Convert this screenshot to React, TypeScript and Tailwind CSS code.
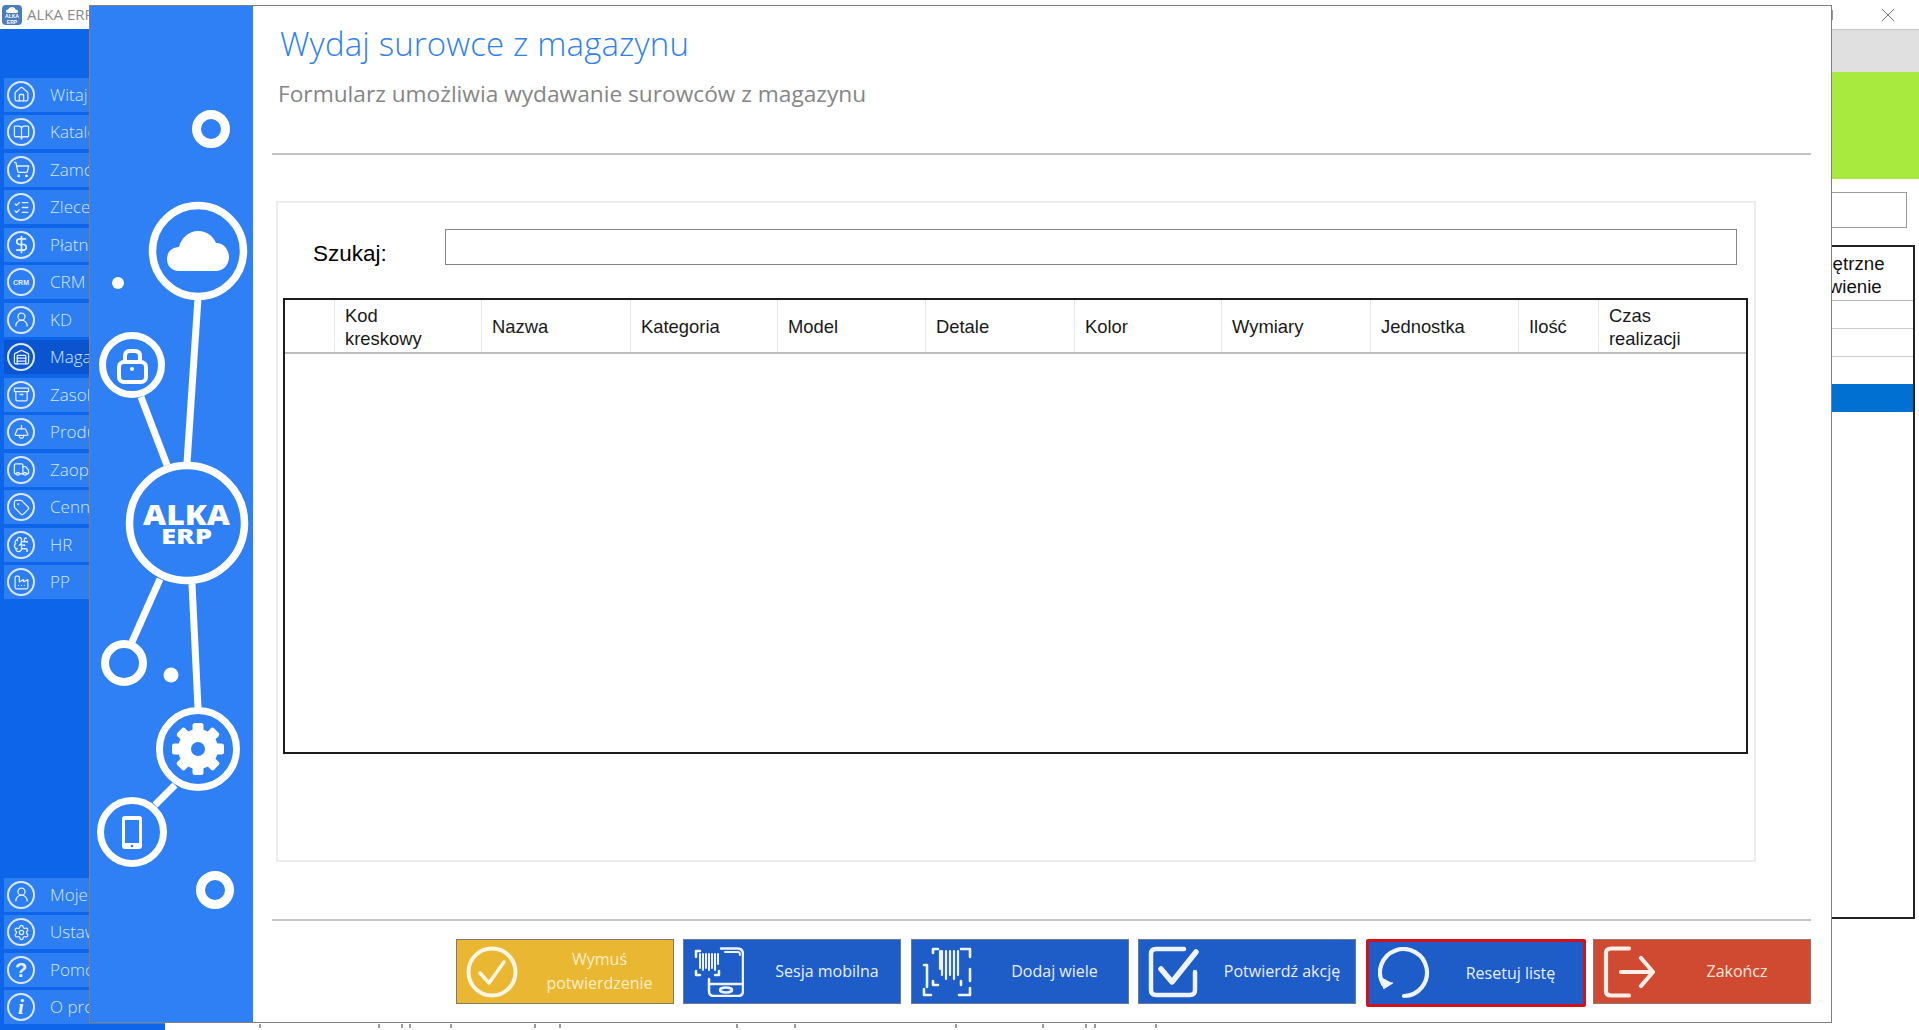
import React from "react";
import {
  Home, BookOpen, ShoppingCart, ListChecks, DollarSign, UserRound, Warehouse, Archive,
  LampCeiling, Truck, Tag, BrainCircuit, Factory, Settings,
} from "lucide-react";

const seg = "font-['Open_Sans','Noto_Sans',sans-serif]";
const ari = "font-['Liberation_Sans',Arial,sans-serif]";

type Item = { label: string; icon: React.ReactNode; active?: boolean };
const ic = { size: 17, strokeWidth: 1.8, color: "#e6effd" };
const topItems: Item[] = [
  { label: "Witaj", icon: <Home {...ic} /> },
  { label: "Katalog", icon: <BookOpen {...ic} /> },
  { label: "Zamówienia", icon: <ShoppingCart {...ic} /> },
  { label: "Zlecenia", icon: <ListChecks {...ic} /> },
  { label: "Płatności", icon: <DollarSign {...ic} size={19} strokeWidth={2.2} /> },
  { label: "CRM", icon: <span className={`${ari} text-[7px] font-bold leading-none text-[#e6effd]`}>CRM</span> },
  { label: "KD", icon: <UserRound {...ic} /> },
  { label: "Magazyn", icon: <Warehouse {...ic} />, active: true },
  { label: "Zasoby", icon: <Archive {...ic} /> },
  { label: "Produkcja", icon: <LampCeiling {...ic} /> },
  { label: "Zaopatrzenie", icon: <Truck {...ic} /> },
  { label: "Cennik", icon: <Tag {...ic} /> },
  { label: "HR", icon: <BrainCircuit {...ic} /> },
  { label: "PP", icon: <Factory {...ic} /> },
];
const bottomItems: Item[] = [
  { label: "Moje konto", icon: <UserRound {...ic} /> },
  { label: "Ustawienia", icon: <Settings {...ic} /> },
  { label: "Pomoc", icon: <span className={`${ari} text-[20px] font-bold leading-none text-[#e6effd]`}>?</span> },
  { label: "O programie", icon: <span className="font-['Liberation_Serif',serif] text-[21px] font-bold italic leading-none text-[#f2f6fe]">i</span> },
];

function NavItem({ item }: { item: Item }) {
  return (
    <div className={`flex h-[34px] items-center pl-[3px] ${item.active ? "bg-[#0a55cf]" : "bg-[#2c7ef2]"}`}>
      <div className="flex h-[28px] w-[28px] shrink-0 items-center justify-center rounded-full border-2 border-[#dbe8fc]">
        {item.icon}
      </div>
      <span className={`${seg} ml-[15px] whitespace-nowrap text-[17px] font-light text-[#d6e5fc]`}>{item.label}</span>
    </div>
  );
}

function Art() {
  const w = "#ffffff";
  const bg = "#2f7ff5";
  return (
    <svg width="163" height="1016" viewBox="90 6 163 1016" className="block">
      <g stroke={w} strokeWidth="7" fill="none">
        <path d="M198 298 L187 463" />
        <path d="M141 397 L167 465" />
        <path d="M160 579 L132 642" strokeWidth="7" />
        <path d="M192 584 L198 708" />
        <path d="M175 785 L155 805" />
      </g>
      <g fill="none" stroke={w}>
        <circle cx="211" cy="129" r="14.5" strokeWidth="9" />
        <circle cx="198" cy="251" r="45.5" strokeWidth="7.5" />
        <circle cx="132" cy="365" r="29.5" strokeWidth="7" />
        <circle cx="187" cy="523" r="57.5" strokeWidth="7.5" />
        <circle cx="124" cy="663" r="19" strokeWidth="8" />
        <circle cx="198" cy="749" r="38.5" strokeWidth="7" />
        <circle cx="132" cy="832" r="31.5" strokeWidth="7" />
        <circle cx="215" cy="890" r="14.5" strokeWidth="9" />
      </g>
      <circle cx="118" cy="283" r="6" fill={w} />
      <circle cx="171" cy="675" r="7.5" fill={w} />
      <path fill={w} d="M179 271 C171 271 167 265 167 259 C167 252 172 247 179 247 C181 238 189 231 198 231 C207 231 213 236 216 243 C224 243 229 250 229 257 C229 265 223 271 216 271 Z" />
      <g fill="none" stroke={w} strokeWidth="4">
        <rect x="119" y="362" width="27" height="20" rx="5" />
        <path d="M125 362 V356 Q125 351 130 351 H135 Q140 351 140 356 V362" />
      </g>
      <circle cx="132" cy="369" r="2" fill={w} />
      <text x="143" y="525" fill={w} textLength="87" lengthAdjust="spacingAndGlyphs" className={`${seg} text-[29px] font-extrabold`}>ALKA</text>
      <text x="161" y="544" fill={w} textLength="51" lengthAdjust="spacingAndGlyphs" className={`${seg} text-[21px] font-extrabold`}>ERP</text>
      <g fill={w}>
        <circle cx="198" cy="749" r="20" />
        {[0, 45, 90, 135, 180, 225, 270, 315].map((a) => (
          <rect key={a} x="192.5" y="723" width="11" height="12" rx="2.5" transform={`rotate(${a} 198 749)`} />
        ))}
      </g>
      <circle cx="198" cy="749" r="7" fill={bg} />
      <rect x="122" y="816" width="20" height="33" rx="3" fill={w} />
      <rect x="125" y="820" width="14" height="23" fill={bg} />
      <circle cx="132" cy="846" r="1.3" fill={bg} />
    </svg>
  );
}

const S = { fill: "none", stroke: "#eef3fc", strokeLinecap: "round" as const, strokeLinejoin: "round" as const };

function IconCheck() {
  return (
    <svg width="52" height="52" viewBox="0 0 52 52" {...S} stroke="#fdf6e2" strokeWidth="4">
      <circle cx="26" cy="26" r="23.5" />
      <path d="M14 27 L23 37 L38 16" strokeWidth="3.5" />
    </svg>
  );
}
function IconMobile() {
  return (
    <svg width="50" height="50" viewBox="0 0 50 50" {...S} strokeWidth="2.5">
      <path d="M27 1.5 H43 Q49 1.5 49 7 V44 Q49 49 44 49 H20 Q15 49 15 44 V32" />
      <path d="M31 5 H44 Q46 5 46 8" strokeWidth="2" />
      <path d="M15 37 H49" />
      <ellipse cx="32" cy="43" rx="6" ry="2.5" />
      <path d="M2 10 V4 H6 M2 24 V28 H6 M25 24 V28 H21" />
      <path d="M6 7 V21 M9 7 V23 M12 7 V21 M15 7 V23 M18 7 V21 M21 7 V23 M24 7 V17" strokeWidth="2" />
    </svg>
  );
}
function IconBarcode() {
  return (
    <svg width="50" height="50" viewBox="0 0 50 50" {...S} strokeWidth="2.6">
      <path d="M11 6 V2 H16 M39 2 H48 V10 M2 18 H5 M5 18 V40 M2 42 V48 H9 M37 48 H48 V41 M48 22 V34" />
      <path d="M11 34 V38 H16 M39 34 V38" />
      <path d="M20 4 V28 M24 4 V32 M28 4 V28 M32 4 V32 M36 4 V28 M18 4 V22" strokeWidth="2.2" />
    </svg>
  );
}
function IconConfirm() {
  return (
    <svg width="52" height="52" viewBox="0 0 52 52" {...S} strokeWidth="4.5">
      <path d="M36 3 H8 Q3 3 3 8 V44 Q3 49 8 49 H42 Q47 49 47 44 V26" />
      <path d="M13 23 L24 36 L48 6" strokeWidth="5.5" />
    </svg>
  );
}
function IconReset() {
  return (
    <svg width="52" height="52" viewBox="0 0 52 52" {...S} strokeWidth="4.2">
      <path d="M5 37 A23.5 23.5 0 1 1 26 49" />
      <path d="M3 30 L6 41 L14 36" fill="#eef3fc" strokeWidth="2" />
    </svg>
  );
}
function IconExit() {
  return (
    <svg width="52" height="52" viewBox="0 0 52 52" {...S} stroke="#fdeee9" strokeWidth="4.2">
      <path d="M26 2.5 H8 Q3 2.5 3 7 V45 Q3 49.5 8 49.5 H26" />
      <path d="M18 26 H50 M38 12 L50 26 L38 40" />
    </svg>
  );
}

const cols = ["", "Kod kreskowy", "Nazwa", "Kategoria", "Model", "Detale", "Kolor", "Wymiary", "Jednostka", "Ilość", "Czas realizacji"];

type Btn = { icon: React.ReactNode; text: string; cls: string; txt: string; red?: boolean };
const buttons: Btn[] = [
  { icon: <IconCheck />, text: "Wymuś potwierdzenie", cls: "bg-[#e9b732] border-[#7d7a6c]", txt: "text-[#fbeec6]" },
  { icon: <IconMobile />, text: "Sesja mobilna", cls: "bg-[#1e5cc8] border-[#6a7a92]", txt: "text-[#e9effa]" },
  { icon: <IconBarcode />, text: "Dodaj wiele", cls: "bg-[#1e5cc8] border-[#6a7a92]", txt: "text-[#e9effa]" },
  { icon: <IconConfirm />, text: "Potwierdź akcję", cls: "bg-[#1e5cc8] border-[#6a7a92]", txt: "text-[#e9effa]" },
  { icon: <IconReset />, text: "Resetuj listę", cls: "", txt: "text-[#e9effa]", red: true },
  { icon: <IconExit />, text: "Zakończ", cls: "bg-[#cf4a30] border-[#8a7a76]", txt: "text-[#fbe5de]" },
];

const ticks = [260, 379, 402, 410, 451, 535, 560, 737, 795, 956, 1043, 1086, 1095, 1156];

export default function App() {
  return (
    <div className={`relative flex h-[1030px] w-[1919px] flex-col overflow-hidden bg-white ${seg}`}>
      {/* window title bar */}
      <div className="flex h-[29px] shrink-0 items-center bg-white">
        <div className="ml-[2px] flex h-[20px] w-[20px] flex-col items-center justify-end rounded-sm bg-[#4a7cc0]">
          <svg width="12" height="6" viewBox="0 0 12 6" fill="#ffffff"><path d="M2 6 Q0 6 0 4 Q0 2.5 2 2.5 Q3 0 6 0 Q9 0 9.5 2.5 Q12 2.5 12 4.5 Q12 6 10 6 Z" /></svg>
          <span className={`${ari} text-[5px] font-bold leading-[6px] text-white`}>ALKA</span>
          <span className={`${ari} text-[5px] font-bold leading-[6px] text-white`}>ERP</span>
        </div>
        <span className="ml-[5px] text-[15px] text-[#8a8a8a]">ALKA ERP</span>
        <div className="ml-auto mr-[24px] flex items-center gap-[48px]">
          <div className="h-[10px] w-[8px] border border-[#9a9a9a]" />
          <svg width="14" height="14" viewBox="0 0 14 14" stroke="#777" strokeWidth="1"><path d="M1 1 L13 13 M13 1 L1 13" /></svg>
        </div>
      </div>

      <div className="flex min-h-0 flex-1">
        {/* sidebar */}
        <div className="flex w-[165px] shrink-0 flex-col overflow-hidden bg-[#0d66ea] pb-[6px] pl-[4px] pt-[48.5px]">
          <div className="flex flex-col gap-[3.5px]">
            {topItems.map((i) => <NavItem key={i.label} item={i} />)}
          </div>
          <div className="mt-auto flex flex-col gap-[3.5px]">
            {bottomItems.map((i) => <NavItem key={i.label} item={i} />)}
          </div>
        </div>

        {/* page behind the dialog */}
        <div className="flex min-w-0 flex-1 flex-col">
          <div className="h-[43px] shrink-0 border-t border-[#c8c8c8] bg-[#e0e0e0]" />
          <div className="h-[107px] shrink-0 bg-[#a9ea3f]" />
          <div className="ml-auto mr-[12px] mt-[13px] h-[36px] w-[300px] shrink-0 border border-[#9a9a9a]" />
          <div className={`${ari} ml-auto mr-[4px] mt-[17px] flex h-[674px] w-[400px] shrink-0 flex-col border-2 border-[#222] text-[18.7px] text-[#111]`}>
            <div className="flex h-[54px] shrink-0 items-center justify-end border-b border-[#bbbbbb] pt-[2px]">
              <span className="w-[132px] leading-[23px]">Wewnętrzne Zamówienie</span>
            </div>
            <div className="h-[28px] shrink-0 border-b border-[#cccccc]" />
            <div className="h-[28px] shrink-0 border-b border-[#cccccc]" />
            <div className="h-[27px] shrink-0" />
            <div className="h-[28px] shrink-0 bg-[#0070d3]" />
          </div>
        </div>
      </div>

      {/* bits of the page's text showing under the dialog */}
      <svg width="1100" height="5" viewBox="160 0 1100 5" className="absolute left-[160px] top-[1024px]" stroke="#555" strokeWidth="1.2">
        {ticks.map((x) => <path key={x} d={`M${x} 0 V4`} />)}
      </svg>

      {/* dialog */}
      <div className="absolute left-[89px] top-[5px] flex h-[1018px] w-[1743px] border border-[#808080] bg-white">
        <div className="w-[163px] shrink-0 bg-[#2f7ff5]">
          <Art />
        </div>
        <div className="flex min-w-0 flex-1 flex-col pl-[19px] pr-[20px]">
          <h1 className="mt-[16px] h-[44px] pl-[8px] text-[33px] font-light leading-[44px] tracking-[0.15px] text-[#2f7ff0]">Wydaj surowce z magazynu</h1>
          <p className="mt-[12px] h-[32px] pl-[6px] text-[22.7px] font-normal leading-[32px] text-[#868686]">Formularz umożliwia wydawanie surowców z magazynu</p>
          <div className="mt-[43px] h-[2px] shrink-0 bg-[#c4c4c4]" />

          <div className="ml-[4px] mt-[46px] flex h-[661px] w-[1480px] shrink-0 flex-col border-2 border-[#ececec] pl-[5px] pt-[26px]">
            <div className="flex">
              <span className={`${ari} ml-[30px] w-[132px] pt-[7px] text-[22.5px] leading-[36px] text-black`}>Szukaj:</span>
              <div className="h-[36px] w-[1292px] border-[1.5px] border-[#858585]" />
            </div>
            <div className={`${ari} mt-[26px] flex h-[456px] w-[1465px] flex-col border-2 border-[#1c1c1c] text-[18.4px] text-[#1a1a1a]`}>
              <div className="grid h-[54px] shrink-0 grid-cols-[50px_147px_149px_147px_148px_149px_147px_149px_148px_80px_147px] border-b-2 border-[#bdbdbd]">
                {cols.map((c, i) => (
                  <div key={i} className="flex items-center border-r border-[#e8e8e8] pl-[10px] pr-[30px] pt-[1px] leading-[23px] last:border-r-0">{c}</div>
                ))}
              </div>
            </div>
          </div>

          <div className="mt-[57px] h-[2px] shrink-0 bg-[#c4c4c4]" />
          <div className="ml-[183.5px] mt-[18px] flex items-start gap-[9.5px]">
            {buttons.map((b) => (
              <div
                key={b.text}
                className={`flex w-[218px] shrink-0 items-center ${b.red ? "-mr-[2px] h-[68px] w-[220px] rounded-[2px] border-[3px] border-[#d3111b] bg-[#1e5cc8]" : `h-[65px] border ${b.cls}`}`}
              >
                <div className="flex w-[70px] shrink-0 items-center justify-center">{b.icon}</div>
                <span className={`flex-1 pb-[1px] text-center text-[16px] leading-[24px] ${b.txt}`}>{b.text}</span>
              </div>
            ))}
          </div>
        </div>
      </div>
    </div>
  );
}
